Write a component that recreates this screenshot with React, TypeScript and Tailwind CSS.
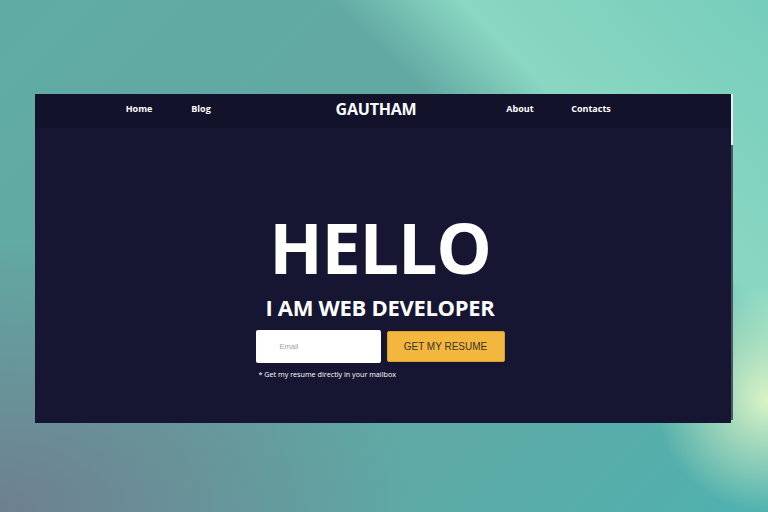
export default function App() {
  const navLink = 'text-[9px] font-bold text-white text-center';

  return (
    <div
      className="w-[768px] h-[512px] overflow-hidden pt-[94px] pl-[35px] bg-[radial-gradient(circle_at_100%_78%,#d9f3c6_0%,rgba(200,240,200,0)_13%),radial-gradient(ellipse_at_0%_100%,#6e7f90_0%,rgba(110,127,144,0)_38%),linear-gradient(45deg,rgba(0,0,0,0)_66%,rgba(140,218,196,0.95)_76%,rgba(122,211,191,0.85)_100%),linear-gradient(135deg,#60aca5_0%,#63a8a2_45%,#5eaaa6_70%,#4fb2af_100%)]"
      style={{ fontFamily: '"Open Sans", "Noto Sans", sans-serif' }}
    >
      <div className="flex">
        <div className="w-[696px] h-[329px] bg-[#161633] flex flex-col">
          {/* NAV */}
          <nav className="h-[34px] bg-[#12132b] flex items-center pb-[4px]">
            <div className="w-[73px]" />
            <a className={`${navLink} w-[62px]`}>Home</a>
            <a className={`${navLink} w-[62px]`}>Blog</a>
            <div className="w-[84px]" />
            <div className="w-[120px] text-center text-white font-bold text-[16px] tracking-[-0.2px]">GAUTHAM</div>
            <div className="w-[49px]" />
            <a className={`${navLink} w-[70px]`}>About</a>
            <a className={`${navLink} w-[72px]`}>Contacts</a>
          </nav>

          {/* HERO */}
          <section className="flex-1 flex flex-col items-center pr-[6px] pt-[84px]">
            <h1 className="text-white font-bold text-[70px] leading-[70px] tracking-[-1.2px]">HELLO</h1>
            <h2 className="text-white font-bold text-[22px] leading-[24px] mt-[13px] tracking-[-0.3px]">I AM WEB DEVELOPER</h2>
            <div className="flex flex-col mt-[11px]">
              <div className="flex gap-[6px]">
                <div className="w-[125px] h-[33px] bg-white rounded-[2px] flex items-center pl-[24px]">
                  <span className="text-[7.5px] text-gray-400" style={{ fontFamily: '"Liberation Sans", Arial, sans-serif' }}>Email</span>
                </div>
                <button
                  className="w-[118px] h-[31px] mt-[1px] bg-[#f3b63f] rounded-[2px] border border-[#d99f2f] text-[#3a3326] text-[10px] flex items-center justify-center"
                  style={{ fontFamily: '"Liberation Sans", Arial, sans-serif' }}
                >
                  GET MY RESUME
                </button>
              </div>
              <p className="text-[7.2px] text-white mt-[6px] ml-[3px]">* Get my resume directly in your mailbox</p>
            </div>
          </section>
        </div>
        <div className="flex flex-col w-[2px] h-[326px]">
          <div className="h-[51px] bg-[#e6eef0]" />
          <div className="flex-1 bg-[#4c5862]" />
        </div>
      </div>
    </div>
  );
}
